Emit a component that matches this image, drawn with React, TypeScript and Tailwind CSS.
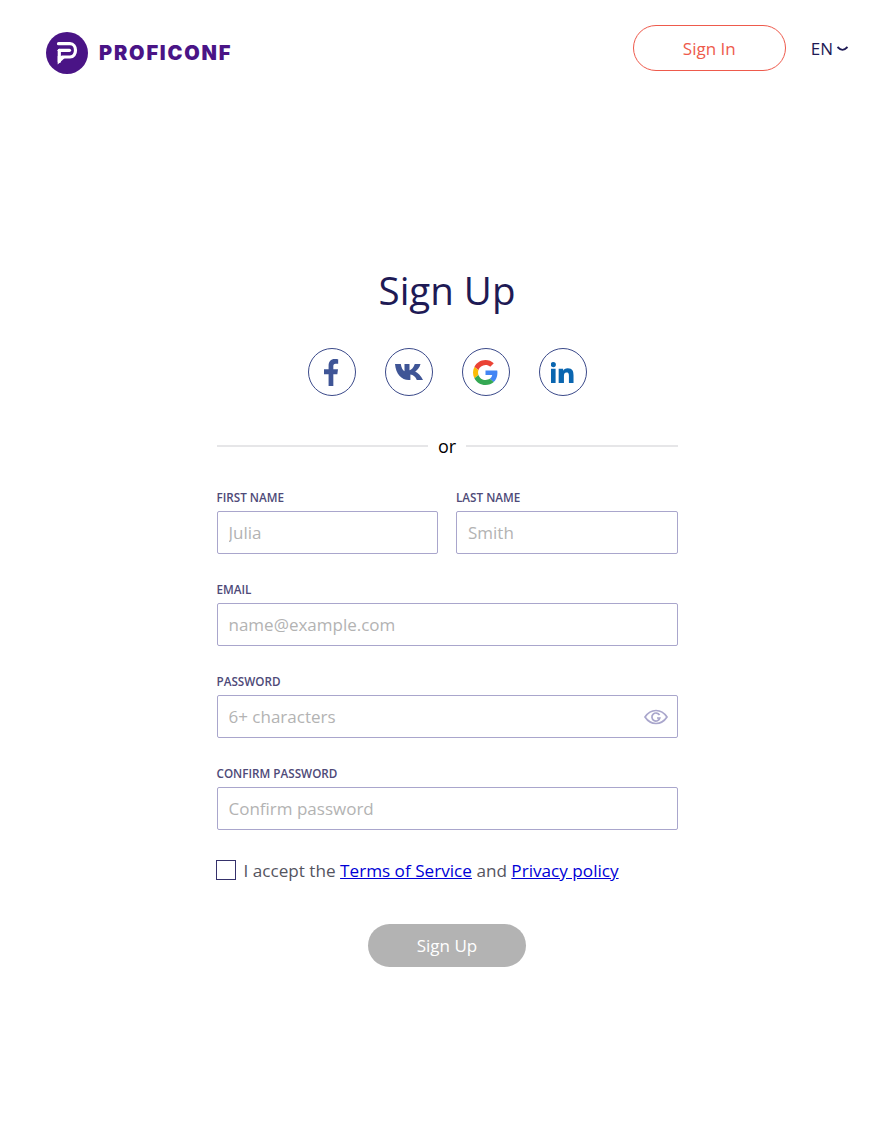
function Logo() {
  return (
    <div className="flex items-center gap-[11px]">
      <svg width="42" height="42" viewBox="0 0 42 42">
        <circle cx="21" cy="21" r="21" fill="#4a1486" />
        <g fill="none" stroke="#fff" strokeWidth="3.200" strokeLinecap="round">
          <path d="M12.500 11.700H24c3.500 0 5.500 3.300 5.500 6.600 0 3.700-2 6.700-5.500 6.700h-8" />
          <path d="M13.300 18.300H23.500" />
          <path d="M13.300 18.300V29.500" />
        </g>
        <path d="M11.700 24v8.500l7-6.500z" fill="#fff" />
      </svg>
      <span className="font-['Inter',sans-serif] text-[20px] leading-none font-black tracking-[1.800px] text-[#4a1486]">
        PROFICONF
      </span>
    </div>
  );
}

function SocialCircle({ children }: { children: React.ReactNode }) {
  return (
    <a
      href="#"
      className="flex h-12 w-12 items-center justify-center rounded-full border border-[#3b4a8a] bg-white"
    >
      {children}
    </a>
  );
}

function Field({
  label,
  placeholder,
  children,
}: {
  label: string;
  placeholder: string;
  children?: React.ReactNode;
}) {
  return (
    <div className="relative flex-1">
      <label className="mb-[7px] block text-[11.700px] leading-[14px] font-semibold text-[#4e4a78] uppercase">
        {label}
      </label>
      <input
        placeholder={placeholder}
        className="h-[43px] w-full rounded-[2px] border border-[#a9a6cc] bg-white px-[11px] text-[17px] text-[#1f1a5a] outline-none placeholder:text-[#b3b3b3]"
      />
      {children}
    </div>
  );
}

export default function App() {
  return (
    <div className="min-h-[1148px] bg-white font-['Open_Sans',sans-serif]">
      <header className="flex items-start justify-between pt-[25px] pr-[45px] pl-[46px]">
        <div className="pt-[7px]">
          <Logo />
        </div>
        <div className="flex items-center gap-[25px]">
          <button className="h-[46px] w-[153px] rounded-full border border-[#ee5a4c] pt-px text-[17px] text-[#ee5a4c]">
            Sign In
          </button>
          <div className="flex items-center gap-[3px] pt-px text-[17px] text-[#1e1a55]">
            EN
            <svg width="13" height="6" viewBox="0 0 13 6" fill="none" stroke="#1e1a55" strokeWidth="1.800">
              <path d="M1.500 1c1.800 1.800 3.200 2.800 5 2.800s3.200-1 5-2.800" />
            </svg>
          </div>
        </div>
      </header>

      <main className="mx-auto w-[461px] pt-[191px]">
        <h1 className="text-center text-[38.500px] leading-[50px] text-[#1e1a55]">Sign Up</h1>

        <div className="mt-[33px] flex justify-center gap-[29px]">
          <SocialCircle>
            <svg width="15" height="27" viewBox="0 0 18 30" preserveAspectRatio="none">
              <path
                d="M5.500 30V17H0v-5.500h5.500V7.500C5.500 2.500 8.500 0 12.500 0c2 0 3.800.2 4.500.3v5h-3c-2.300 0-2.800 1.200-2.800 2.800v3.400h5.600l-.8 5.500h-4.800v13z"
                fill="#3f5596"
              />
            </svg>
          </SocialCircle>
          <SocialCircle>
            <svg width="30" height="18" viewBox="0 0 30 18">
              <path
                d="M0 1h5.800c.5 3.500 2 6.500 3.700 7.300V1h5v6.200C16.500 7 18.800 4 19.800 1h5.700c-.8 3.500-3.200 6.200-5.300 7.500 2.400 1.200 5.800 4 7.800 8.500h-6.200c-1.200-3-3.500-5-6.400-5.400V17h-1.600C6.500 17 .8 11 0 1z"
                fill="#3f5596"
                transform="translate(1 0)"
              />
            </svg>
          </SocialCircle>
          <SocialCircle>
            <svg width="25" height="25" viewBox="0 0 48 48">
              <path fill="#EA4335" d="M24 9.500c3.500 0 6.700 1.300 9.100 3.500l6.800-6.800C35.800 2.400 30.200 0 24 0 14.600 0 6.500 5.400 2.600 13.200l7.900 6.200C12.400 13.600 17.700 9.500 24 9.500z" />
              <path fill="#4285F4" d="M46.900 24.500c0-1.600-.1-3.100-.4-4.500H24v9h12.900c-.6 3-2.200 5.500-4.700 7.200l7.600 5.900c4.500-4.100 7.100-10.200 7.100-17.600z" />
              <path fill="#FBBC05" d="M10.500 28.600c-.5-1.500-.8-3-.8-4.600s.3-3.200.8-4.600l-7.900-6.200C.9 16.500 0 20.100 0 24s.9 7.500 2.600 10.800l7.900-6.200z" />
              <path fill="#34A853" d="M24 48c6.500 0 11.900-2.100 15.900-5.900l-7.600-5.900c-2.200 1.400-4.900 2.300-8.200 2.300-6.300 0-11.600-4.200-13.500-9.900l-7.900 6.200C6.500 42.600 14.600 48 24 48z" />
            </svg>
          </SocialCircle>
          <SocialCircle>
            <svg width="23" height="21" viewBox="0 0 24 22" preserveAspectRatio="none">
              <path
                d="M0 7h4.800v15H0zM2.400 0a2.700 2.700 0 110 5.400 2.700 2.700 0 010-5.400zM8 7h4.600v2.100c.7-1.300 2.400-2.500 4.900-2.500 5 0 6 3.200 6 7.500V22h-4.800v-7c0-1.700 0-3.900-2.400-3.900s-2.800 1.800-2.800 3.800V22H8z"
                fill="#0a66b0"
              />
            </svg>
          </SocialCircle>
        </div>

        <div className="mt-[38px] flex items-center gap-[10px]">
          <div className="h-[2px] flex-1 bg-[#e6e6e8]" />
          <span className="text-[18px] leading-[24px] text-black">or</span>
          <div className="h-[2px] flex-1 bg-[#e6e6e8]" />
        </div>

        <form className="mt-[32px] flex flex-col gap-[28px]">
          <div className="flex gap-[18px]">
            <Field label="First name" placeholder="Julia" />
            <Field label="Last name" placeholder="Smith" />
          </div>
          <Field label="Email" placeholder="name@example.com" />
          <Field label="Password" placeholder="6+ characters">
            <svg
              className="absolute right-[10px] bottom-[12px]"
              width="24"
              height="18"
              viewBox="0 0 24 18"
              fill="none"
              stroke="#a9a6cc"
              strokeWidth="1.700"
            >
              <path d="M1 9c3-4.500 6.500-6.500 11-6.500S20 4.500 23 9c-3 4.500-6.500 6.500-11 6.500S4 13.500 1 9z" />
              <path d="M15.500 7.200A4 4 0 1015.800 10H13" />
            </svg>
          </Field>
          <Field label="Confirm password" placeholder="Confirm password" />
        </form>

        <div className="mt-[28px] flex items-start gap-[8px] text-[17.150px] leading-[24px] text-[#55555f]">
          <span className="-ml-px mt-[2px] h-5 w-5 border border-[#35316b]" />
          <span className="pt-px">
            I accept the{" "}
            <a href="#" className="text-[#0000d6] underline">
              Terms of Service
            </a>{" "}
            and{" "}
            <a href="#" className="text-[#0000d6] underline">
              Privacy policy
            </a>
          </span>
        </div>

        <div className="mt-[41px] flex justify-center">
          <button className="h-[43px] w-[158px] rounded-full bg-[#b3b3b3] text-[17px] text-white">
            Sign Up
          </button>
        </div>
      </main>
    </div>
  );
}
